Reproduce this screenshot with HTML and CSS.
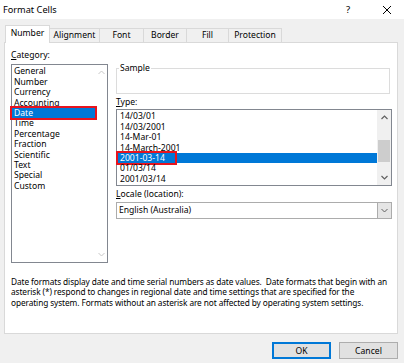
FILE: index.html
```html
<!DOCTYPE html>
<html>
<head>
<meta charset="utf-8">
<link rel="stylesheet" href="styles.css">
</head>
<body>
<div class="titlebar">
  <span class="title">Format Cells</span>
  <span class="help">?</span>
  <svg class="close" width="10" height="10" viewBox="0 0 10 10"><path d="M1 1L9 9M9 1L1 9" stroke="#000" stroke-width="1"/></svg>
</div>
<div class="tabs">
  <div class="tab active w-number">Number</div>
  <div class="tab w-align">Alignment</div>
  <div class="tab w-font">Font</div>
  <div class="tab w-border">Border</div>
  <div class="tab w-fill">Fill</div>
  <div class="tab w-prot">Protection</div>
</div>
<div class="panel">
  <div class="cols">
    <div class="leftcol">
      <div class="label"><u>C</u>ategory:</div>
      <div class="listbox catlist">
        <div class="items">
          <div class="item">General</div>
          <div class="item">Number</div>
          <div class="item">Currency</div>
          <div class="item">Accounting</div>
          <div class="item sel marked">Date</div>
          <div class="item">Time</div>
          <div class="item">Percentage</div>
          <div class="item">Fraction</div>
          <div class="item">Scientific</div>
          <div class="item">Text</div>
          <div class="item">Special</div>
          <div class="item">Custom</div>
        </div>
        <div class="vscroll disabled">
          <svg width="7" height="5" viewBox="0 0 7 5"><path d="M0.5 4L3.5 1L6.5 4" fill="none" stroke="#c8c8c8" stroke-width="1"/></svg>
          <svg width="7" height="5" viewBox="0 0 7 5"><path d="M0.5 1L3.5 4L6.5 1" fill="none" stroke="#c8c8c8" stroke-width="1"/></svg>
        </div>
      </div>
    </div>
    <div class="rightcol">
      <fieldset class="sample">
        <legend>Sample</legend>
        <div class="sample-body"></div>
      </fieldset>
      <div class="label type-label"><u>T</u>ype:</div>
      <div class="listbox typelist">
        <div class="items">
          <div class="item">14/03/01</div>
          <div class="item">14/03/2001</div>
          <div class="item">14-Mar-01</div>
          <div class="item">14-March-2001</div>
          <div class="item sel"><span class="mark">2001-03-14</span></div>
          <div class="item">01/03/14</div>
          <div class="item">2001/03/14</div>
        </div>
        <div class="vscroll active-scroll">
          <svg width="7" height="5" viewBox="0 0 7 5"><path d="M0.5 4L3.5 1L6.5 4" fill="none" stroke="#606060" stroke-width="1.2"/></svg>
          <div class="track"><div class="thumb"></div></div>
          <svg width="7" height="5" viewBox="0 0 7 5"><path d="M0.5 1L3.5 4L6.5 1" fill="none" stroke="#606060" stroke-width="1.2"/></svg>
        </div>
      </div>
      <div class="label locale-label"><u>L</u>ocale (location):</div>
      <div class="combo">
        <span class="combo-text">English (Australia)</span>
        <span class="combo-btn"><svg width="7" height="5" viewBox="0 0 7 5"><path d="M0.5 1L3.5 4L6.5 1" fill="none" stroke="#606060" stroke-width="1"/></svg></span>
      </div>
    </div>
  </div>
  <p class="desc">Date formats display date and time serial numbers as date values.&nbsp; Date formats that begin with an<br>asterisk (*) respond to changes in regional date and time settings that are specified for the<br>operating system. Formats without an asterisk are not affected by operating system settings.</p>
</div>
<div class="footer">
  <button class="btn default">OK</button>
  <button class="btn">Cancel</button>
</div>
</body>
</html>
```
FILE: styles.css
```css
* { box-sizing: border-box; }
html, body { margin: 0; padding: 0; }
body {
  width: 404px;
  height: 363px;
  overflow: hidden;
  background: #f0f0f0;
  font-family: "Noto Sans", "Open Sans", sans-serif;
  font-size: 8.6px;
  line-height: 10.4px;
  color: #000;
}
u { text-decoration: underline; text-underline-offset: 1px; }

.titlebar {
  height: 19px;
  background: #fff;
  display: flex;
  align-items: center;
  padding: 1px 0 0 3px;
}
.title { flex: 1; font-size: 9.2px; }
.help { width: 8px; margin-right: 28px; font-size: 9.6px; }
.close { margin-right: 12px; }

.tabs {
  display: flex;
  align-items: flex-end;
  height: 23px;
  padding-left: 5px;
}
.tab {
  height: 14px;
  border: 1px solid #d9d9d9;
  border-bottom: none;
  margin-left: -1px;
  display: flex;
  align-items: center;
  justify-content: center;
  background: #f0f0f0;
}
.tab:first-child { margin-left: 0; }
.tab.active {
  height: 18px;
  background: #fff;
  margin-bottom: -1px;
  position: relative;
  z-index: 1;
  padding-bottom: 3px;
}
.w-number { width: 45px; }
.w-align { width: 51px; }
.w-font { width: 45px; }
.w-border { width: 44px; }
.w-fill { width: 43px; }
.w-prot { width: 54px; }

.panel {
  margin: 0 6px 0 4px;
  height: 292px;
  background: #fff;
  border: 1px solid #d9d9d9;
  padding: 7px 4px 0 6px;
}
.cols {
  display: grid;
  grid-template-columns: 97px 276px;
  column-gap: 8px;
}
.label { height: 10.4px; }
.leftcol { display: flex; flex-direction: column; }
.catlist { margin-top: 4px; height: 199px; }

.listbox {
  border: 1px solid #828790;
  display: flex;
  background: #fff;
}
.items { flex: 1; padding-top: 1px; }
.item { height: 10.4px; padding-left: 2px; white-space: nowrap; }
.item.sel { background: #0078d7; color: #fff; }
.item.marked { outline: 2px solid #e8141e; outline-offset: 0; }
.mark {
  display: inline-block;
  outline: 2px solid #e8141e;
  margin-left: -2px;
  padding: 0 10px 0 2px;
  height: 10.4px;
}

.vscroll {
  width: 12px;
  display: flex;
  flex-direction: column;
  align-items: center;
  justify-content: space-between;
  padding: 5px 0 5px;
}
.typelist .items { padding-top: 1px; padding-left: 1px; }
.typelist .item { padding-left: 2px; }
.active-scroll {
  width: 14px;
  background: #f0f0f0;
  padding: 5px 0 5px;
}
.track { flex: 1; width: 100%; display: flex; flex-direction: column; padding-top: 20px; }
.thumb { width: 12px; margin-left: 1px; height: 22px; background: #cdcdcd; }

.rightcol { display: flex; flex-direction: column; }
.sample {
  margin: 13px 0 0 0;
  padding: 0;
  border: 1px solid #dcdcdc;
  min-width: 0;
  width: 274px;
}
.sample legend {
  padding: 0 1px;
  margin-left: 2px;
  line-height: 10px;
  height: 10px;
}
.sample-body { height: 20px; }
.type-label { margin-top: 3px; }
.typelist { margin-top: 2px; height: 77px; }
.locale-label { margin-top: 3px; }
.combo {
  margin-top: 2.6px;
  height: 16.5px;
  border: 1px solid #acacac;
  display: flex;
  align-items: center;
  padding-left: 2px;
}
.combo-text { flex: 1; }
.combo-btn {
  width: 14px;
  height: 14.5px;
  background: #e5e5e5;
  border-left: 1px solid #acacac;
  display: flex;
  align-items: center;
  justify-content: center;
}

.desc {
  margin: 13.5px 0 0 0;
  white-space: nowrap;
  font-size: 8.3px;
  letter-spacing: -0.1px;
}

.footer {
  display: flex;
  justify-content: flex-end;
  gap: 8px;
  padding: 8px 6px 0 0;
}
.btn {
  width: 59px;
  height: 17px;
  font-family: "Noto Sans", "Open Sans", sans-serif;
  font-size: 8.6px;
  line-height: 10px;
  padding: 0;
  background: #e1e1e1;
  border: 1px solid #adadad;
  color: #000;
}
.btn.default { border: 2px solid #0078d7; }
```
